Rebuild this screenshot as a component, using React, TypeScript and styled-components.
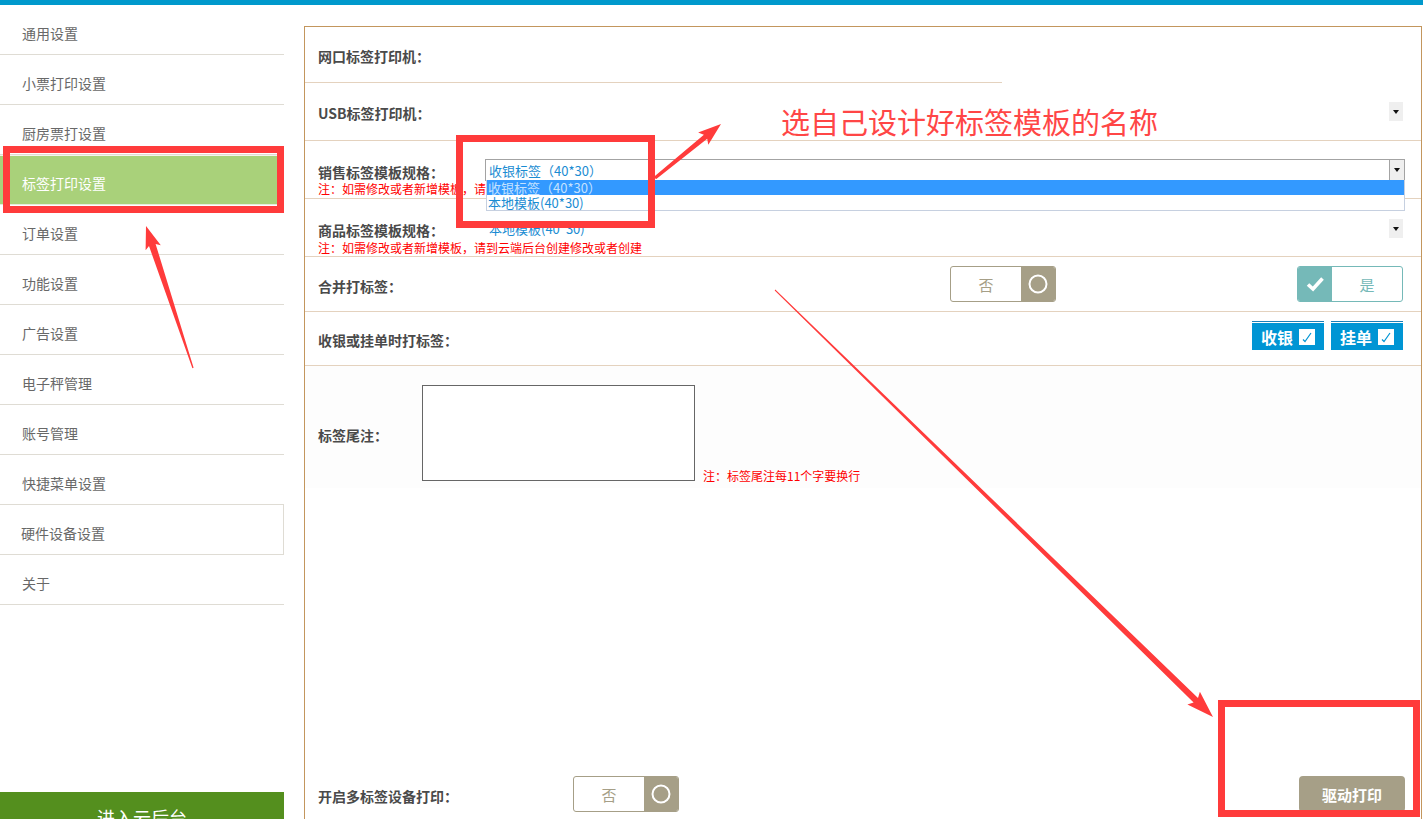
import React from "react";
import styled, { createGlobalStyle, css } from "styled-components";

const GlobalStyle = createGlobalStyle`
  html, body { margin: 0; padding: 0; background: #fff; overflow: hidden; }
  body { font-family: "Noto Sans CJK SC", "Liberation Sans", sans-serif; }
  * { box-sizing: border-box; }
`;

const Page = styled.div`
  position: relative;
  width: 1423px;
  height: 846px;
  display: flex;
  flex-direction: column;
  overflow: hidden;
`;

const TopBar = styled.div`
  height: 5px;
  flex-shrink: 0;
  background: #0099cc;
`;

const Body = styled.div`
  flex: 1;
  display: flex;
  min-height: 0;
`;

/* ---------- sidebar ---------- */

const Sidebar = styled.nav`
  width: 284px;
  flex-shrink: 0;
  display: flex;
  flex-direction: column;
`;

const NavItem = styled.div<{ $active?: boolean; $boxed?: boolean }>`
  height: 50px;
  flex-shrink: 0;
  display: flex;
  align-items: center;
  padding: 6px 0 0 22px;
  font-size: 14px;
  color: #686868;
  border-bottom: 1px solid #dfdcd4;
  ${(p) =>
    p.$active &&
    css`
      background: #a9d17a;
      color: #fff;
      border-top: 1px solid #f4f4ee;
      border-bottom-color: #e6eadc;
    `}
  ${(p) =>
    p.$boxed &&
    css`
      border-right: 1px solid #dfdcd4;
      padding-left: 21px;
    `}
`;

const CloudButton = styled.div`
  margin-top: auto;
  height: 54px;
  background: #548f1e;
  color: #fff;
  font-size: 18px;
  display: flex;
  align-items: center;
  justify-content: center;
  padding-bottom: 4px;
`;

/* ---------- main panel ---------- */

const Main = styled.main`
  flex: 1;
  display: flex;
  padding: 21px 1px 0 20px;
  min-width: 0;
`;

const Panel = styled.section`
  flex: 1;
  display: flex;
  flex-direction: column;
  border: 1px solid #c3965d;
  border-bottom: none;
  background: #fff;
`;

const Row = styled.div<{
  $h?: number;
  $width?: number;
  $stack?: boolean;
  $padTop?: number;
  $shade?: boolean;
}>`
  position: relative;
  flex-shrink: 0;
  display: flex;
  padding: 0 18px 0 13px;
  border-bottom: 1px solid #e4d2be;
  ${(p) => (p.$h ? `height: ${p.$h}px;` : "")}
  ${(p) => (p.$width ? `width: ${p.$width}px;` : "")}
  ${(p) =>
    p.$stack
      ? css`
          flex-direction: column;
          align-items: stretch;
          padding-top: ${p.$padTop ?? 0}px;
        `
      : css`
          align-items: center;
        `}
  ${(p) =>
    p.$shade &&
    css`
      background: #fdfdfd;
      border-bottom: none;
      padding-top: 19px;
      padding-bottom: 7px;
    `}
`;

const FieldLine = styled.div<{ $h: number }>`
  height: ${(p) => p.$h}px;
  display: flex;
  align-items: center;
`;

const Label = styled.span<{ $w?: number }>`
  flex-shrink: 0;
  ${(p) => (p.$w ? `width: ${p.$w}px;` : "")}
  padding-top: 3px;
  font-size: 14px;
  font-weight: 700;
  color: #4a4a4a;
  white-space: nowrap;
`;

const Note = styled.div<{ $gap?: number }>`
  margin-top: ${(p) => p.$gap ?? 0}px;
  font-size: 12px;
  line-height: 14px;
  color: #ff0000;
  white-space: nowrap;
`;

/* ---------- selects ---------- */

const SelectBox = styled.div<{ $bordered?: boolean }>`
  position: relative;
  flex: 1;
  display: flex;
  align-items: center;
  ${(p) =>
    p.$bordered
      ? css`
          height: 22px;
          margin-right: -2px;
          border: 1px solid #a3a3a3;
          background: #fff;
          z-index: 2;
        `
      : css`
          height: 19px;
        `}
`;

const SelectValue = styled.span`
  padding-left: 3px;
  font-size: 13px;
  color: #1a8cd2;
  white-space: nowrap;
`;

const SelectArrow = styled.span<{ $bordered?: boolean }>`
  margin-left: auto;
  width: ${(p) => (p.$bordered ? 15 : 14)}px;
  height: 100%;
  display: flex;
  align-items: center;
  justify-content: center;
  background: #efefef;
  ${(p) => p.$bordered && "border-left: 1px solid #a3a3a3;"}

  &::after {
    content: "";
    border-left: 3px solid transparent;
    border-right: 3px solid transparent;
    border-top: 4px solid #111;
  }
`;

const OptionList = styled.ul`
  position: absolute;
  top: 100%;
  left: 0;
  right: -1px;
  margin: 0;
  padding: 0;
  list-style: none;
  background: #fff;
  border: 1px solid #c6d0e0;
  border-top: none;
`;

const Option = styled.li<{ $selected?: boolean }>`
  height: 15px;
  line-height: 15px;
  padding-left: 1px;
  font-size: 13px;
  white-space: nowrap;
  color: ${(p) => (p.$selected ? "#c4e2ff" : "#1a8cd2")};
  background: ${(p) => (p.$selected ? "#3399ff" : "#fff")};
`;

/* ---------- switches & buttons ---------- */

const Toggle = styled.div<{ $on?: boolean }>`
  width: 106px;
  height: 36px;
  flex-shrink: 0;
  display: flex;
  flex-direction: ${(p) => (p.$on ? "row" : "row-reverse")};
  border: 1px solid ${(p) => (p.$on ? "#75b9b8" : "#a69f87")};
  border-radius: 3px;
  overflow: hidden;
  background: #fff;
`;

const ToggleKnob = styled.span<{ $on?: boolean }>`
  width: 34px;
  display: flex;
  align-items: center;
  justify-content: center;
  background: ${(p) => (p.$on ? "#75b9b8" : "#a69f87")};
`;

const ToggleText = styled.span<{ $on?: boolean }>`
  flex: 1;
  display: flex;
  align-items: center;
  justify-content: center;
  font-size: 15px;
  color: ${(p) => (p.$on ? "#75b9b8" : "#a69f87")};
`;

const Spacer = styled.div`
  flex: 1;
`;

const ButtonGroup = styled.div`
  margin-left: auto;
  margin-top: -6px;
  display: flex;
  gap: 7px;
`;

const ChannelButton = styled.div`
  width: 72px;
  height: 29px;
  display: flex;
  align-items: center;
  justify-content: center;
  gap: 6px;
  border-top: 1px solid #1b80b9;
  background: linear-gradient(#fff 0 1px, #0095d4 1px);
  color: #fff;
  font-size: 16px;
  font-weight: 700;
  padding-top: 1px;
`;

const CheckSquare = styled.span`
  width: 16px;
  height: 16px;
  display: inline-flex;
  background: #fff;
`;

const NoteArea = styled.textarea`
  width: 273px;
  height: 96px;
  flex-shrink: 0;
  border: 1px solid #666;
  background: #fff;
  resize: none;
  outline: none;
`;

const TailNote = styled(Note)`
  align-self: flex-end;
  margin-left: 8px;
  margin-bottom: -2px;
`;

const BottomRow = styled.div`
  margin-top: auto;
  height: 70px;
  display: flex;
  align-items: center;
  padding: 0 16px 34px 13px;
`;

const PrintButton = styled.div`
  margin-left: auto;
  width: 106px;
  height: 36px;
  display: flex;
  align-items: center;
  justify-content: center;
  border-radius: 4px;
  background: #a69f87;
  color: #fff;
  font-size: 15px;
  font-weight: 700;
`;

/* ---------- annotation layer ---------- */

const MarkBox = styled.div<{ $x: number; $y: number; $w: number; $h: number }>`
  position: absolute;
  left: ${(p) => p.$x}px;
  top: ${(p) => p.$y}px;
  width: ${(p) => p.$w}px;
  height: ${(p) => p.$h}px;
  border: 7px solid #ff3b3b;
  pointer-events: none;
  z-index: 10;
`;

const MarkText = styled.div`
  position: absolute;
  left: 781px;
  top: 104px;
  font-size: 29px;
  line-height: 34px;
  color: #ff4646;
  white-space: nowrap;
  pointer-events: none;
  z-index: 10;
`;

const ArrowLayer = styled.svg`
  position: absolute;
  left: 0;
  top: 0;
  width: 1423px;
  height: 846px;
  pointer-events: none;
  z-index: 11;
`;

type Pt = [number, number];

// Tapered arrow: shaft grows from the tail to the head, barbs swept back slightly.
function arrowPoints(
  tail: Pt,
  tip: Pt,
  headLen: number,
  headHalf: number,
  shaftHead: number,
  shaftTail: number
): string {
  const dx = tip[0] - tail[0];
  const dy = tip[1] - tail[1];
  const len = Math.hypot(dx, dy);
  const ux = dx / len;
  const uy = dy / len;
  const nx = -uy;
  const ny = ux;
  const bx = tip[0] - ux * headLen;
  const by = tip[1] - uy * headLen;
  const pts: Pt[] = [
    tip,
    [bx + nx * headHalf - ux * 3, by + ny * headHalf - uy * 3],
    [bx + nx * shaftHead, by + ny * shaftHead],
    [tail[0] + nx * shaftTail, tail[1] + ny * shaftTail],
    [tail[0] - nx * shaftTail, tail[1] - ny * shaftTail],
    [bx - nx * shaftHead, by - ny * shaftHead],
    [bx - nx * headHalf - ux * 3, by - ny * headHalf - uy * 3],
  ];
  return pts.map((p) => `${p[0].toFixed(1)},${p[1].toFixed(1)}`).join(" ");
}

const RingIcon = () => (
  <svg width="20" height="20" viewBox="0 0 20 20">
    <circle cx="10" cy="10" r="8.5" fill="none" stroke="#fff" strokeWidth="2" />
  </svg>
);

const CheckIcon = () => (
  <svg width="20" height="18" viewBox="0 0 20 18">
    <path d="M3 9.5 L8 14 L17.5 3.5" fill="none" stroke="#fff" strokeWidth="3.6" strokeLinejoin="miter" />
  </svg>
);

const TinyCheck = () => (
  <svg width="16" height="16" viewBox="0 0 16 16">
    <path d="M4 10.5 L6 12.5 L12 4" fill="none" stroke="#0095d4" strokeWidth="1.2" />
  </svg>
);

const navItems = [
  "通用设置",
  "小票打印设置",
  "厨房票打设置",
  "标签打印设置",
  "订单设置",
  "功能设置",
  "广告设置",
  "电子秤管理",
  "账号管理",
  "快捷菜单设置",
  "硬件设备设置",
  "关于",
];

const NOTE_TEXT = "注：如需修改或者新增模板，请到云端后台创建修改或者创建";

function Switch({ on }: { on?: boolean }) {
  return (
    <Toggle $on={on}>
      <ToggleKnob $on={on}>{on ? <CheckIcon /> : <RingIcon />}</ToggleKnob>
      <ToggleText $on={on}>{on ? "是" : "否"}</ToggleText>
    </Toggle>
  );
}

export default function App() {
  return (
    <Page>
      <GlobalStyle />
      <TopBar />
      <Body>
        <Sidebar>
          {navItems.map((name) => (
            <NavItem key={name} $active={name === "标签打印设置"} $boxed={name === "硬件设备设置"}>
              {name}
            </NavItem>
          ))}
          <CloudButton>进入云后台</CloudButton>
        </Sidebar>

        <Main>
          <Panel>
            <Row $h={56} $width={697}>
              <Label>网口标签打印机：</Label>
            </Row>

            <Row $h={58}>
              <Label $w={167}>USB标签打印机：</Label>
              <SelectBox>
                <SelectArrow />
              </SelectBox>
            </Row>

            <Row $h={58} $stack $padTop={18}>
              <FieldLine $h={22}>
                <Label $w={167}>销售标签模板规格：</Label>
                <SelectBox $bordered>
                  <SelectValue>收银标签（40*30）</SelectValue>
                  <SelectArrow $bordered />
                  <OptionList>
                    <Option $selected>收银标签（40*30）</Option>
                    <Option>本地模板(40*30)</Option>
                  </OptionList>
                </SelectBox>
              </FieldLine>
              <Note $gap={1}>{NOTE_TEXT}</Note>
            </Row>

            <Row $h={58} $stack $padTop={20}>
              <FieldLine $h={19}>
                <Label $w={167}>商品标签模板规格：</Label>
                <SelectBox>
                  <SelectValue style={{ paddingLeft: 4 }}>本地模板(40*30)</SelectValue>
                  <SelectArrow />
                </SelectBox>
              </FieldLine>
              <Note $gap={3}>{NOTE_TEXT}</Note>
            </Row>

            <Row $h={55}>
              <Label $w={632}>合并打标签：</Label>
              <Switch />
              <Spacer />
              <Switch on />
            </Row>

            <Row $h={54}>
              <Label>收银或挂单时打标签：</Label>
              <ButtonGroup>
                <ChannelButton>
                  收银
                  <CheckSquare>
                    <TinyCheck />
                  </CheckSquare>
                </ChannelButton>
                <ChannelButton>
                  挂单
                  <CheckSquare>
                    <TinyCheck />
                  </CheckSquare>
                </ChannelButton>
              </ButtonGroup>
            </Row>

            <Row $shade>
              <Label $w={104}>标签尾注：</Label>
              <NoteArea />
              <TailNote>注：标签尾注每11个字要换行</TailNote>
            </Row>

            <BottomRow>
              <Label $w={255}>开启多标签设备打印：</Label>
              <Switch />
              <PrintButton>驱动打印</PrintButton>
            </BottomRow>
          </Panel>
        </Main>
      </Body>

      <MarkBox $x={3} $y={146} $w={281} $h={67} />
      <MarkBox $x={456} $y={135} $w={199} $h={93} />
      <MarkBox $x={1218} $y={700} $w={202} $h={117} />
      <MarkText>选自己设计好标签模板的名称</MarkText>

      <ArrowLayer viewBox="0 0 1423 846">
        <polygon points={arrowPoints([193, 368], [146, 226], 20, 8, 3.5, 0.6)} fill="#ff3b3b" />
        <polygon points={arrowPoints([655, 178], [721, 124], 20, 8, 2.6, 1.6)} fill="#ff3b3b" />
        <polygon points={arrowPoints([775, 290], [1213, 717], 24, 9, 3.2, 0.5)} fill="#ff3b3b" />
      </ArrowLayer>
    </Page>
  );
}
